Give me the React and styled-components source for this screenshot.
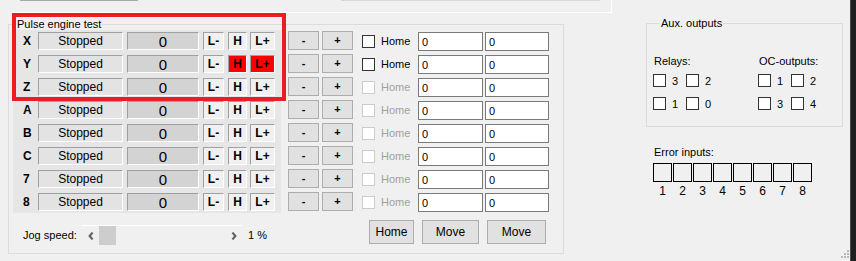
import React from 'react';
import styled, { createGlobalStyle } from 'styled-components';

const Global = createGlobalStyle`
  html, body { margin: 0; padding: 0; background: #f0f0f0; }
  body { font-family: "Liberation Sans", Arial, sans-serif; font-size: 11px; color: #000; }
  * { box-sizing: border-box; }
`;

const Page = styled.div`
  position: relative;
  width: 856px;
  height: 261px;
  overflow: hidden;
  display: flex;
  background: #f0f0f0;
`;

const Main = styled.div`
  flex: 1;
  min-width: 0;
  display: flex;
  flex-direction: column;
`;

const Edge = styled.div`
  width: 6px;
  background: #1f1f1f;
  border-left: 1px solid #4a4a4a;
`;

const TopPanel = styled.div`
  margin-left: 10px;
  width: 602px;
  height: 13px;
  border-right: 1px solid #fff;
  border-bottom: 1px solid #fff;
  display: flex;
  align-items: flex-start;
`;

const TopStub = styled.div`
  margin-left: ${p => p.$left}px;
  width: ${p => p.$w}px;
  height: 1px;
  background: ${p => p.$c};
`;

const Content = styled.div`
  display: flex;
  align-items: flex-start;
  margin-top: 5px;
`;

const Group = styled.fieldset`
  margin: ${p => p.$margin};
  width: ${p => p.$w}px;
  padding: ${p => p.$pad};
  border: 1px solid #dcdcdc;
  min-width: 0;
`;

const Legend = styled.legend`
  margin-left: 7px;
  padding: 0 1px;
  font-size: 11px;
  line-height: 12px;
  color: #000;
`;

const Columns = styled.div`
  display: grid;
  grid-template-columns: 268px auto;
  column-gap: 7px;
  margin-left: 4px;
`;

const LeftCol = styled.div`
  display: flex;
  flex-direction: column;
`;

const RightCol = styled.div`
  display: flex;
  flex-direction: column;
  padding-top: 1px;
`;

const RowsPanel = styled.div`
  background: #e6e6e6;
  padding: 2px 6px 2px 10px;
  display: flex;
  flex-direction: column;
  gap: 5px;
`;

const AxisRow = styled.div`
  height: 18px;
  display: flex;
  align-items: center;
`;

const Axis = styled.div`
  width: 15px;
  font-weight: bold;
  font-size: 12px;
`;

const Sunken = styled.div`
  width: ${p => p.$w}px;
  height: 18px;
  margin-right: ${p => p.$mr || 0}px;
  border: 1px solid;
  border-color: #a0a0a0 #fff #fff #a0a0a0;
  background: ${p => p.$bg};
  display: flex;
  align-items: center;
  justify-content: center;
  font-size: ${p => p.$fs || 12}px;
  font-weight: ${p => (p.$bold ? 'bold' : 'normal')};
  line-height: 1;
`;

const RightRows = styled.div`
  display: flex;
  flex-direction: column;
  gap: 3px;
`;

const RightRow = styled.div`
  height: 20px;
  display: flex;
  align-items: center;
`;

const Btn = styled.button`
  width: ${p => p.$w}px;
  height: ${p => p.$h}px;
  margin: 0 ${p => p.$mr || 0}px 0 ${p => p.$ml || 0}px;
  padding: 0;
  border: 1px solid #adadad;
  background: #e1e1e1;
  font-family: "Liberation Sans", Arial, sans-serif;
  font-size: ${p => p.$fs || 11}px;
  font-weight: ${p => (p.$bold ? 'bold' : 'normal')};
  color: #000;
  align-self: flex-start;
  line-height: 1;
`;

const Check = styled.span`
  display: inline-block;
  width: 13px;
  height: 13px;
  margin-left: ${p => p.$ml || 0}px;
  border: 1px solid ${p => (p.$disabled ? '#cccccc' : '#333333')};
  background: #fff;
  flex: none;
`;

const CheckLabel = styled.span`
  width: ${p => p.$w}px;
  margin-left: 6px;
  font-size: 11px;
  color: ${p => (p.$disabled ? '#a0a0a0' : '#000')};
`;

const Field = styled.div`
  width: ${p => p.$w}px;
  height: 19px;
  margin-left: ${p => p.$ml || 0}px;
  align-self: flex-end;
  border: 1px solid #7a7a7a;
  background: #fff;
  padding-left: 3px;
  font-size: 11px;
  display: flex;
  align-items: center;
`;

const ButtonsRow = styled.div`
  display: flex;
  margin-top: 8px;
  margin-left: 81px;
`;

const JogRow = styled.div`
  display: flex;
  align-items: center;
  margin-top: 12px;
  height: 20px;
`;

const JogLabel = styled.span`
  margin-left: 10px;
  width: 59px;
`;

const ScrollBar = styled.div`
  width: 160px;
  height: 20px;
  border-top: 1px solid #fff;
  display: flex;
  align-items: stretch;
`;

const ScrollArrow = styled.div`
  width: 17px;
  display: flex;
  align-items: center;
  justify-content: center;
`;

const Thumb = styled.div`
  width: 17px;
  background: #cdcdcd;
`;

const Track = styled.div`
  flex: 1;
`;

const Percent = styled.span`
  margin-left: 6px;
`;

const AuxCol = styled.div`
  margin-left: 82px;
  margin-top: -1px;
  display: flex;
  flex-direction: column;
`;

const SubGroups = styled.div`
  display: flex;
  padding-top: 26px;
`;

const SubGroup = styled.div`
  width: ${p => p.$w}px;
  display: flex;
  flex-direction: column;
`;

const SubLabel = styled.div`
  padding-left: 1px;
  line-height: 13px;
  margin-bottom: 6px;
`;

const CheckGrid = styled.div`
  display: grid;
  grid-template-columns: 33px 33px;
  row-gap: 10px;
`;

const CheckItem = styled.div`
  display: flex;
  align-items: center;
  height: 13px;
`;

const ErrLabel = styled.div`
  margin: 19px 0 4px 8px;
  line-height: 13px;
`;

const ErrBoxes = styled.div`
  display: flex;
  gap: 1px;
  margin-left: 7px;
`;

const ErrCell = styled.div`
  width: 19px;
  display: flex;
  flex-direction: column;
  align-items: center;
`;

const ErrBox = styled.div`
  width: 19px;
  height: 19px;
  border: 1px solid #000;
`;

const ErrNum = styled.div`
  margin-top: 3px;
  line-height: 12px;
  font-size: 12px;
`;

const Highlight = styled.div`
  position: absolute;
  left: 12px;
  top: 13px;
  width: 274px;
  height: 88px;
  border: 4px solid #ed1c24;
  pointer-events: none;
`;

const Grip = styled.svg`
  position: absolute;
  right: 6px;
  bottom: 2px;
`;

const axes = ['X', 'Y', 'Z', 'A', 'B', 'C', '7', '8'];

function LeftChevron() {
  return (
    <svg width="6" height="8" viewBox="0 0 6 8">
      <path d="M4.6 0.6 L1.6 4 L4.6 7.4" fill="none" stroke="#606060" strokeWidth="2.1" />
    </svg>
  );
}

function RightChevron() {
  return (
    <svg width="6" height="8" viewBox="0 0 6 8">
      <path d="M1.4 0.6 L4.4 4 L1.4 7.4" fill="none" stroke="#606060" strokeWidth="2.1" />
    </svg>
  );
}

export default function App() {
  return (
    <>
      <Global />
      <Page>
        <Main>
          <TopPanel>
            <TopStub $left={10} $w={118} $c="#a8a8a8" />
            <TopStub $left={203} $w={259} $c="#d8d8d8" />
          </TopPanel>
          <Content>
            <Group $margin="0 0 0 8px" $w={556} $pad="0 0 8px 0">
              <Legend>Pulse engine test</Legend>
              <Columns>
                <LeftCol>
                  <RowsPanel>
                    {axes.map((a, i) => {
                      const red = i === 1;
                      return (
                        <AxisRow key={a}>
                          <Axis>{a}</Axis>
                          <Sunken $w={85} $mr={4} $bg="#e3e3e3" $fs={12}>Stopped</Sunken>
                          <Sunken $w={72} $mr={4} $bg="#d3d3d3" $fs={15}>0</Sunken>
                          <Sunken $w={21} $mr={4} $bg="#f0f0f0" $bold>L-</Sunken>
                          <Sunken $w={19} $mr={3} $bg={red ? '#ff0000' : '#f0f0f0'} $bold>H</Sunken>
                          <Sunken $w={25} $bg={red ? '#ff0000' : '#f0f0f0'} $bold>L+</Sunken>
                        </AxisRow>
                      );
                    })}
                  </RowsPanel>
                  <JogRow>
                    <JogLabel>Jog speed:</JogLabel>
                    <ScrollBar>
                      <ScrollArrow><LeftChevron /></ScrollArrow>
                      <Thumb />
                      <Track />
                      <ScrollArrow><RightChevron /></ScrollArrow>
                    </ScrollBar>
                    <Percent>1 %</Percent>
                  </JogRow>
                </LeftCol>
                <RightCol>
                  <RightRows>
                    {axes.map((a, i) => {
                      const dis = i > 1;
                      return (
                        <RightRow key={a}>
                          <Btn $w={31} $h={19} $mr={3} $bold>-</Btn>
                          <Btn $w={31} $h={19} $bold>+</Btn>
                          <Check $ml={9} $disabled={dis} />
                          <CheckLabel $w={37} $disabled={dis}>Home</CheckLabel>
                          <Field $w={65}>0</Field>
                          <Field $w={64} $ml={2}>0</Field>
                        </RightRow>
                      );
                    })}
                  </RightRows>
                  <ButtonsRow>
                    <Btn $w={45} $h={24} $mr={8} $fs={12}>Home</Btn>
                    <Btn $w={57} $h={24} $mr={8} $fs={12}>Move</Btn>
                    <Btn $w={59} $h={24} $fs={12}>Move</Btn>
                  </ButtonsRow>
                </RightCol>
              </Columns>
            </Group>
            <AuxCol>
              <Group $margin="0" $w={197} $pad="0 0 16px 6px">
                <Legend>Aux. outputs</Legend>
                <SubGroups>
                  <SubGroup $w={105}>
                    <SubLabel>Relays:</SubLabel>
                    <CheckGrid>
                      {['3', '2', '1', '0'].map(n => (
                        <CheckItem key={n}><Check /><CheckLabel>{n}</CheckLabel></CheckItem>
                      ))}
                    </CheckGrid>
                  </SubGroup>
                  <SubGroup $w={80}>
                    <SubLabel>OC-outputs:</SubLabel>
                    <CheckGrid>
                      {['1', '2', '3', '4'].map(n => (
                        <CheckItem key={n}><Check /><CheckLabel>{n}</CheckLabel></CheckItem>
                      ))}
                    </CheckGrid>
                  </SubGroup>
                </SubGroups>
              </Group>
              <ErrLabel>Error inputs:</ErrLabel>
              <ErrBoxes>
                {[1, 2, 3, 4, 5, 6, 7, 8].map(n => (
                  <ErrCell key={n}>
                    <ErrBox />
                    <ErrNum>{n}</ErrNum>
                  </ErrCell>
                ))}
              </ErrBoxes>
            </AuxCol>
          </Content>
        </Main>
        <Edge />
        <Highlight />
        <Grip width="9" height="9" viewBox="0 0 9 9">
          <rect x="6" y="0" width="2" height="2" fill="#b8b8b8" />
          <rect x="3" y="3" width="2" height="2" fill="#b8b8b8" />
          <rect x="6" y="3" width="2" height="2" fill="#b8b8b8" />
          <rect x="0" y="6" width="2" height="2" fill="#b8b8b8" />
          <rect x="3" y="6" width="2" height="2" fill="#b8b8b8" />
          <rect x="6" y="6" width="2" height="2" fill="#b8b8b8" />
        </Grip>
      </Page>
    </>
  );
}
